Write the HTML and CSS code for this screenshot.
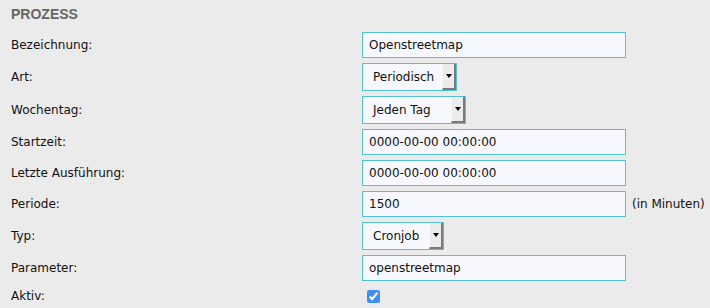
FILE: index.html
```html
<!DOCTYPE html>
<html lang="de">
  <head>
    <meta charset="utf-8" />
    <title>Prozess</title>
    <link rel="stylesheet" href="styles.css">
  </head>
  <body>
    <div class="panel">
      <h2 class="title">PROZESS</h2>
      <form class="form">
        <label class="label">Bezeichnung:</label>
        <div class="field"><input class="text" type="text" value="Openstreetmap" /></div>

        <label class="label">Art:</label>
        <div class="field">
          <span class="select select-art"><span class="select-value">Periodisch</span><span class="select-btn"><i class="caret"></i></span></span>
        </div>

        <label class="label">Wochentag:</label>
        <div class="field">
          <span class="select select-day"><span class="select-value">Jeden Tag</span><span class="select-btn"><i class="caret"></i></span></span>
        </div>

        <label class="label">Startzeit:</label>
        <div class="field"><input class="text" type="text" value="0000-00-00 00:00:00" /></div>

        <label class="label">Letzte Ausführung:</label>
        <div class="field"><input class="text" type="text" value="0000-00-00 00:00:00" /></div>

        <label class="label">Periode:</label>
        <div class="field"><input class="text" type="text" value="1500" /><span class="unit">(in Minuten)</span></div>

        <label class="label">Typ:</label>
        <div class="field">
          <span class="select select-type"><span class="select-value">Cronjob</span><span class="select-btn"><i class="caret"></i></span></span>
        </div>

        <label class="label">Parameter:</label>
        <div class="field"><input class="text" type="text" value="openstreetmap" /></div>

        <label class="label">Aktiv:</label>
        <div class="field check-row"><input class="check" type="checkbox" checked /></div>
      </form>
    </div>
  </body>
</html>
```

FILE: styles.css
```css
body {
  margin: 0;
  background-color: #ebebeb;
  font-family: "DejaVu Sans", Verdana, sans-serif;
  font-size: 12px;
  color: #111;
}
.panel {
  padding: 5px 11px 0;
}
.title {
  margin: 0 0 9px;
  font-family: "Liberation Sans", Arial, sans-serif;
  font-size: 14px;
  font-weight: bold;
  color: #666;
  line-height: 18px;
}
.form {
  display: grid;
  grid-template-columns: 351px 1fr;
  row-gap: 5px;
  align-items: center;
}
.label {
  display: block;
}
.field {
  display: flex;
  align-items: center;
  white-space: nowrap;
}
.text {
  box-sizing: border-box;
  flex-shrink: 0;
  width: 264px;
  height: 26px;
  margin: 0;
  padding: 0 6px;
  border: 1px solid #52c2d6;
  border-radius: 0;
  background-color: #f7f8fe;
  font-family: inherit;
  font-size: 12px;
  color: #111;
  outline: none;
}
.unit {
  margin-left: 6px;
}
.select {
  box-sizing: border-box;
  display: flex;
  height: 28px;
  border: 1px solid #52c2d6;
  background-color: #f7f8fe;
}
.select-art {
  width: 95px;
}
.select-day {
  width: 104px;
}
.select-type {
  width: 82px;
}
.select-value {
  flex: 1;
  display: flex;
  align-items: center;
  padding-left: 10px;
  white-space: nowrap;
}
.select-btn {
  box-sizing: border-box;
  width: 14px;
  display: flex;
  align-items: center;
  justify-content: center;
  background-color: #ececec;
  border-left: 1px solid #f8f8f8;
  border-right: 2px solid #7a7a7a;
  border-bottom: 2px solid #7a7a7a;
}
.caret {
  width: 0;
  height: 0;
  border-left: 3px solid transparent;
  border-right: 3px solid transparent;
  border-top: 4px solid #000;
}
.check-row {
  height: 20px;
}
.check {
  width: 13px;
  height: 13px;
  margin: 0 0 0 5px;
  accent-color: #3b8ff7;
}
```
